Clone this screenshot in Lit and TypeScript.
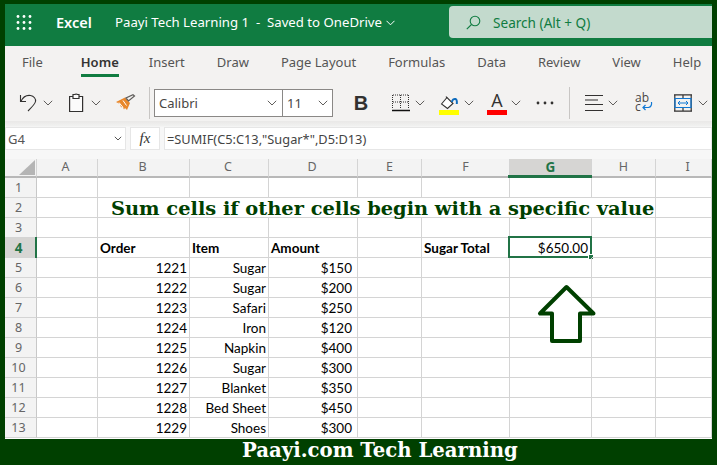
import { LitElement, html, css, svg } from 'lit';
import { customElement } from 'lit/decorators.js';

const COLS = ['A', 'B', 'C', 'D', 'E', 'F', 'G', 'H', 'I'];
const TABS = ['File', 'Home', 'Insert', 'Draw', 'Page Layout', 'Formulas', 'Data', 'Review', 'View', 'Help'];

// order, item, amount for rows 5 to 13
const ROWS = [
  ['1221', 'Sugar', '$150'],
  ['1222', 'Sugar', '$200'],
  ['1223', 'Safari', '$250'],
  ['1224', 'Iron', '$120'],
  ['1225', 'Napkin', '$400'],
  ['1226', 'Sugar', '$300'],
  ['1227', 'Blanket', '$350'],
  ['1228', 'Bed Sheet', '$450'],
  ['1229', 'Shoes', '$300'],
];

const chevron = (cls = '') => html`<svg class="chev ${cls}" width="10" height="6" viewBox="0 0 10 6"><path d="M.8.8 5 5 9.2.8" fill="none" stroke="#605e5c" stroke-width="1"/></svg>`;

@customElement('app-root')
export class AppRoot extends LitElement {
  static styles = css`
    :host {
      display: block;
      width: 717px;
      height: 465px;
      overflow: hidden;
      font-family: 'Noto Sans', sans-serif;
    }
    .page {
      width: 717px;
      height: 465px;
      box-sizing: border-box;
      padding: 4px 5px 0;
      background: #004000;
      display: flex;
      flex-direction: column;
    }
    .top {
      height: 42px;
      flex: none;
      background: #107c41;
      color: #fff;
      display: flex;
      align-items: flex-start;
      padding-left: 11px;
    }
    .top > * { margin-top: 11px; }
    .waffle { width: 16px; height: 15px; }
    .app {
      width: 59px;
      margin-left: 24px;
      margin-top: 8px;
      font-size: 14.5px;
      line-height: 20px;
      font-weight: 600;
    }
    .doc {
      margin-top: 8px;
      font-size: 13.2px;
      line-height: 20px;
      white-space: pre;
    }
    .top .docchev { margin-top: 16px; margin-left: 4px; }
    .search {
      margin-left: auto;
      margin-top: 2px;
      width: 263px;
      height: 32px;
      box-sizing: border-box;
      background: #c3dacd;
      border-radius: 4px 0 0 4px;
      display: flex;
      align-items: center;
      padding-left: 17px;
      color: #107c41;
      font-size: 13.6px;
    }
    .search span { margin-left: 12px; }

    .tabs {
      height: 38px;
      flex: none;
      box-sizing: border-box;
      background: #f3f2f1;
      display: flex;
      gap: 32px;
      padding: 6px 0 0 17px;
      font-size: 13px;
      line-height: 20px;
      color: #555;
    }
    .tab { height: 25px; box-sizing: border-box; white-space: nowrap; }
    .tab.first { margin-right: 6px; }
    .tab.on {
      color: #333;
      font-weight: 600;
      border-bottom: 3px solid #107c41;
      height: 25px;
      margin-right: -2px;
    }

    .tools {
      height: 37px;
      flex: none;
      box-sizing: border-box;
      background: #f3f2f1;
      display: flex;
      align-items: center;
      padding-left: 14px;
    }
    .tools > * { flex: none; }
    .m4 { margin-left: 4px; }
    .m5 { margin-left: 5px; }
    .m6 { margin-left: 6px; }
    .m7 { margin-left: 7px; }
    .m13 { margin-left: 13px; }
    .m14 { margin-left: 14px; }
    .m15 { margin-left: 15px; }
    .m17 { margin-left: 17px; }
    .m18 { margin-left: 18px; }
    .m21 { margin-left: 21px; }
    .sep { width: 1px; height: 32px; background: #c8c6c4; }
    .combo {
      display: flex;
      height: 28px;
      box-sizing: border-box;
      border: 1px solid #8a8886;
      background: #fff;
      font-size: 13px;
      line-height: 26px;
      color: #484644;
      align-items: center;
    }
    .font { width: 129px; padding: 0 5px 0 4px; justify-content: space-between; box-sizing: border-box; }
    .size { width: 51px; padding: 0 4px; margin-left: -1px; justify-content: space-between; box-sizing: border-box; }
    .bold {
      width: 20px;
      text-align: center;
      font: bold 20px/24px 'Liberation Sans', sans-serif;
      color: #323130;
    }
    .color {
      width: 20px;
      height: 24px;
      display: flex;
      flex-direction: column;
      align-items: center;
      justify-content: flex-end;
    }
    .letter {
      font: 18px/17px 'Open Sans', sans-serif;
      color: #323130;
      height: 18px;
    }
    .bar { width: 20px; height: 5px; flex: none; }
    .bar.red { background: #ff0000; }
    .bar.yellow { background: #ffff00; }
    .wrap {
      position: relative;
      width: 18px;
      height: 20px;
      font: 12px/9.5px 'Open Sans', sans-serif;
      color: #484644;
    }
    .wrap svg { position: absolute; left: 0; top: 0; }

    .fbar {
      height: 38px;
      flex: none;
      box-sizing: border-box;
      padding-top: 6px;
      background: linear-gradient(#e9e8e7 0, #f1f1f0 5px, #f7f7f7 6px);
      display: flex;
      gap: 4px;
    }
    .box {
      height: 23px;
      box-sizing: border-box;
      background: #fff;
      border: 1px solid #e6e6e6;
      display: flex;
      align-items: center;
      font-size: 13px;
      color: #444;
    }
    .name { width: 121px; padding: 0 3px 0 2px; justify-content: space-between; color: #555; }
    .fx {
      width: 30px;
      justify-content: center;
      font: italic 15px 'Liberation Serif', serif;
      color: #333;
    }
    .formula { flex: 1; padding-left: 2px; white-space: nowrap; font-size: 12.8px; }

    .sheet {
      position: relative;
      flex: none;
      height: 280px;
      background: #fff;
      display: grid;
      grid-template-columns: 32px 61px 92px 79px 89px 64px 88px 82px 64px 56px;
      grid-template-rows: 19px repeat(13, 20px);
      font: 13.5px/21px Lato, sans-serif;
      color: #000;
    }
    .corner {
      background: #f3f3f3;
      border-right: 1px solid #d4d4d4;
      border-bottom: 2px solid #b8b8b8;
      box-sizing: border-box;
      position: relative;
    }
    .corner::after {
      content: '';
      position: absolute;
      left: 14px;
      top: 1px;
      border-style: solid;
      border-width: 0 0 15px 16px;
      border-color: transparent transparent #b5b5b5 transparent;
    }
    .ch {
      background: #f3f3f3;
      border-right: 1px solid #d4d4d4;
      border-bottom: 2px solid #b8b8b8;
      box-sizing: border-box;
      text-align: center;
      font: 12.5px/16px 'Noto Sans', sans-serif;
      color: #666;
      position: relative;
    }
    .ch.A { padding-right: 3px; }
    .ch.B, .ch.C, .ch.D { padding-right: 2px; }
    .ch.I { padding-left: 8px; }
    .ch.on {
      background: #d6d5d3;
      color: #217346;
      font-weight: 700;
      font-size: 13.5px;
    }
    .ch.on::after {
      content: '';
      position: absolute;
      left: -2px;
      right: -1px;
      bottom: -2px;
      height: 3px;
      background: #217346;
    }
    .rh {
      background: #f3f3f3;
      border-right: 1px solid #c8c8c8;
      border-bottom: 1px solid #d4d4d4;
      box-sizing: border-box;
      text-align: center;
      padding-right: 4px;
      font: 12.5px/20px 'Noto Sans', sans-serif;
      color: #666;
      position: relative;
    }
    .rh.on {
      background: #d6d5d3;
      color: #217346;
      font-weight: 700;
      font-size: 13.5px;
    }
    .rh.on::after {
      content: '';
      position: absolute;
      right: -1px;
      top: -1px;
      bottom: -1px;
      width: 2px;
      background: #217346;
    }
    .c {
      border-right: 1px solid #d4d4d4;
      border-bottom: 1px solid #d4d4d4;
      box-sizing: border-box;
      padding: 0 2px;
      white-space: nowrap;
      position: relative;
    }
    .r { text-align: right; }
    .money { padding-right: 5px; }
    .b { font-weight: 700; }
    .title {
      grid-column: span 7;
      padding-left: 13px;
      font: bold 19.4px/21px 'DejaVu Serif', serif;
      color: #004000;
      border-right: 1px solid #d4d4d4;
    }
    .sel { padding-right: 3px; }
    .sel::before {
      content: '';
      position: absolute;
      left: -2px;
      right: -1px;
      top: -2px;
      bottom: -1px;
      border: 2px solid #217346;
      box-sizing: border-box;
    }
    .sel::after {
      content: '';
      position: absolute;
      right: -2px;
      bottom: -2px;
      width: 4px;
      height: 4px;
      background: #217346;
      outline: 1px solid #fff;
    }
    .arrow {
      position: absolute;
      left: 532px;
      top: 125px;
      width: 60px;
      height: 60px;
    }

    .foot {
      flex: 1;
      margin: 0 -5px;
      padding-left: 242px;
      font: bold 19.7px/24px 'DejaVu Serif', serif;
      color: #fff;
      white-space: nowrap;
    }
  `;

  private waffle() {
    const pts = [1.5, 7.5, 13.5];
    return html`<svg class="waffle" viewBox="0 0 16 15">
      ${pts.map((y) => pts.map((x) => svg`<circle cx=${x + 0.5} cy=${y} r="1.4" fill="#fff"/>`))}
    </svg>`;
  }

  private toolbar() {
    return html`<div class="tools">
      <svg width="20" height="20" viewBox="0 0 20 20" fill="none" stroke="#323130" stroke-width="1.1">
        <path d="M1.5 2v6.5H7M1.8 8.5C4 4 8 2 11.5 2.5c3.5.5 5.5 3.5 5 6-.3 2-3 5-7.5 9.5"/>
      </svg>
      ${chevron('m4')}
      <svg class="m15" width="16" height="20" viewBox="0 0 16 20" fill="none" stroke="#323130" stroke-width="1.2">
        <path d="M5 3.5H1.6v15h13v-15H11" fill="#fbfbfb"/>
        <path d="M5 5.5V1.5h1.8a1.5 1 0 0 1 2.6 0H11v4z" fill="#fbfbfb"/>
      </svg>
      ${chevron('m7')}
      <svg class="m15" width="20" height="18" viewBox="0 0 20 18">
        <path d="M0 8 9 3.500l5 5.500-3 7-2-2-1 1.500-1.500-3-1.500 1-1-3.500z" fill="#e8872b"/>
        <path d="M3 8.500l4 5M7 6.500l3.500 5" stroke="#fff" stroke-width="1" fill="none"/>
        <path d="M10 4l2.500 3L18.500 2 17 .8z" fill="#f3f2f1" stroke="#605e5c" stroke-width="1.200"/>
      </svg>
      <div class="sep m13"></div>
      <div class="combo font m4"><span>Calibri</span>${chevron()}</div>
      <div class="combo size"><span>11</span>${chevron()}</div>
      <div class="bold m18">B</div>
      <svg class="m21" width="18" height="18" viewBox="0 0 18 18" fill="none">
        <path d="M.5 1v14M8.500 1v14M16.500 1v14M1 1h16M1 8h16" stroke="#323130" stroke-dasharray="1 1"/>
        <path d="M0 16.500h18" stroke="#111" stroke-width="1.500"/>
      </svg>
      ${chevron('m5')}
      <div class="color m14">
        <svg width="20" height="14" viewBox="0 0 20 14" fill="none">
          <path d="M2.500 8 8 1.500l6 6-5.500 5z" stroke="#323130" stroke-width="1.100" fill="#fff"/>
          <path d="M7 .5 8 2" stroke="#323130" stroke-width="1.100"/>
          <path d="M13 6c0-2 2-3.500 3.500-3s1.500 3 1.300 5" stroke="#0f6cbd" stroke-width="2"/>
        </svg>
        <div class="bar yellow"></div>
      </div>
      ${chevron('m5')}
      <div class="color m13">
        <div class="letter">A</div>
        <div class="bar red"></div>
      </div>
      ${chevron('m4')}
      <svg class="m15" width="18" height="4" viewBox="0 0 18 4" fill="#323130">
        <circle cx="2" cy="2" r="1.400"/><circle cx="9" cy="2" r="1.400"/><circle cx="16" cy="2" r="1.400"/>
      </svg>
      <div class="sep m15"></div>
      <svg class="m15" width="18" height="18" viewBox="0 0 18 18" stroke="#323130" stroke-width="1.200">
        <path d="M0 1.500h18M0 6h13M0 10.500h18M0 16.500h18"/>
      </svg>
      ${chevron('m5')}
      <div class="wrap m17">
        <div>ab</div>
        <div>c</div>
        <svg width="18" height="20" viewBox="0 0 18 20" fill="none">
          <path d="M16.500 9c.5 3-1 5-3 5.500H8M10.500 12 8 14.500l2.500 2.500" stroke="#0f78d4" stroke-width="1.200"/>
        </svg>
      </div>
      <svg class="m21" width="18" height="18" viewBox="0 0 18 18" fill="none">
        <path d="M0 .8h18M0 17.200h18M9 1v3M9 14v3M.8 1v16M17.200 1v16" stroke="#323130" stroke-width="1.200"/>
        <path d="M1 4.500h16v9H1z" stroke="#0f78d4" stroke-width="1.200"/>
        <path d="M4 9h10M6 7 4 9l2 2M12 7l2 2-2 2" stroke="#0f78d4" stroke-width="1"/>
      </svg>
      ${chevron('m6')}
    </div>`;
  }

  private blanks(n: number) {
    return Array.from({ length: n }, () => html`<div class="c"></div>`);
  }

  private grid() {
    return html`<div class="sheet">
      <div class="corner"></div>
      ${COLS.map((c) => html`<div class="ch ${c} ${c === 'G' ? 'on' : ''}">${c}</div>`)}

      <div class="rh">1</div>${this.blanks(9)}

      <div class="rh">2</div>
      <div class="c"></div>
      <div class="c title">Sum cells if other cells begin with a specific value</div>
      <div class="c"></div>

      <div class="rh">3</div>${this.blanks(9)}

      <div class="rh on">4</div>
      <div class="c"></div>
      <div class="c b">Order</div>
      <div class="c b">Item</div>
      <div class="c b">Amount</div>
      <div class="c"></div>
      <div class="c b">Sugar Total</div>
      <div class="c r sel">$650.00</div>
      <div class="c"></div>
      <div class="c"></div>

      ${ROWS.map(
        (row, i) => html`
          <div class="rh">${i + 5}</div>
          <div class="c"></div>
          <div class="c r">${row[0]}</div>
          <div class="c r">${row[1]}</div>
          <div class="c r money">${row[2]}</div>
          ${this.blanks(5)}
        `
      )}

      <svg class="arrow" viewBox="0 0 60 60">
        <path d="M29.500 3 3 29.500H15V57H43V29.500H56.500Z" fill="#fff" stroke="#004000" stroke-width="4" stroke-linejoin="round"/>
      </svg>
    </div>`;
  }

  render() {
    return html`<div class="page">
      <div class="top">
        ${this.waffle()}
        <div class="app">Excel</div>
        <div class="doc">Paayi Tech Learning 1  -  Saved to OneDrive</div>
        <svg class="docchev" width="9" height="6" viewBox="0 0 9 6"><path d="M.5.800 4.500 4.800 8.500.800" fill="none" stroke="#fff"/></svg>
        <div class="search">
          <svg width="15" height="15" viewBox="0 0 15 15" fill="none" stroke="#107c41" stroke-width="1.100">
            <circle cx="9" cy="6" r="4.800"/><path d="M5.500 9.500.800 14.200"/>
          </svg>
          <span>Search (Alt + Q)</span>
        </div>
      </div>
      <div class="tabs">
        ${TABS.map((t, i) => html`<div class="tab ${i === 0 ? 'first' : ''} ${t === 'Home' ? 'on' : ''}">${t}</div>`)}
      </div>
      ${this.toolbar()}
      <div class="fbar">
        <div class="box name"><span>G4</span><svg width="8" height="5" viewBox="0 0 8 5"><path d="M.800.800 4 4 7.200.800" fill="none" stroke="#555"/></svg></div>
        <div class="box fx">fx</div>
        <div class="box formula">=SUMIF(C5:C13,"Sugar*",D5:D13)</div>
      </div>
      ${this.grid()}
      <div class="foot">Paayi.com Tech Learning</div>
    </div>`;
  }
}
